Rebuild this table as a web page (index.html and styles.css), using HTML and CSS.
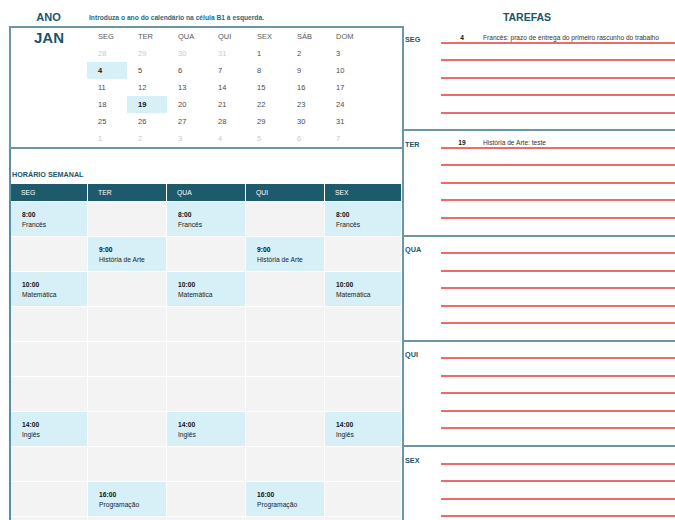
FILE: index.html
```html
<!DOCTYPE html>
<html lang="pt">
<head>
<meta charset="utf-8">
<title>Calendário escolar</title>
<link rel="stylesheet" href="styles.css">
</head>
<body>
<div class="page">
  <div class="top-left">
    <div class="ano">ANO</div>
    <div class="hint">Introduza o ano do calendário na célula B1 à esquerda.</div>
  </div>
  <div class="top-right"><h1 class="tasks-title">TAREFAS</h1></div>

  <div class="left">
    <section class="calendar">
      <div class="month">JAN</div>
      <div class="cal-grid">
        <div class="cal-head">SEG</div><div class="cal-head">TER</div><div class="cal-head">QUA</div><div class="cal-head">QUI</div><div class="cal-head">SEX</div><div class="cal-head">SÁB</div><div class="cal-head">DOM</div>
        <div class="d muted">28</div><div class="d muted">29</div><div class="d muted">30</div><div class="d muted">31</div><div class="d">1</div><div class="d">2</div><div class="d">3</div>
        <div class="d mark">4</div><div class="d">5</div><div class="d">6</div><div class="d">7</div><div class="d">8</div><div class="d">9</div><div class="d">10</div>
        <div class="d">11</div><div class="d">12</div><div class="d">13</div><div class="d">14</div><div class="d">15</div><div class="d">16</div><div class="d">17</div>
        <div class="d">18</div><div class="d mark">19</div><div class="d">20</div><div class="d">21</div><div class="d">22</div><div class="d">23</div><div class="d">24</div>
        <div class="d">25</div><div class="d">26</div><div class="d">27</div><div class="d">28</div><div class="d">29</div><div class="d">30</div><div class="d">31</div>
        <div class="d muted">1</div><div class="d muted">2</div><div class="d muted">3</div><div class="d muted">4</div><div class="d muted">5</div><div class="d muted">6</div><div class="d muted">7</div>
      </div>
    </section>

    <section class="schedule">
      <h2 class="sched-title">HORÁRIO SEMANAL</h2>
      <div class="sched-grid">
        <div class="sh">SEG</div><div class="sh">TER</div><div class="sh">QUA</div><div class="sh">QUI</div><div class="sh">SEX</div>

        <div class="c on"><b>8:00</b><span>Francês</span></div><div class="c"></div><div class="c on"><b>8:00</b><span>Francês</span></div><div class="c"></div><div class="c on"><b>8:00</b><span>Francês</span></div>

        <div class="c"></div><div class="c on"><b>9:00</b><span>História de Arte</span></div><div class="c"></div><div class="c on"><b>9:00</b><span>História de Arte</span></div><div class="c"></div>

        <div class="c on"><b>10:00</b><span>Matemática</span></div><div class="c"></div><div class="c on"><b>10:00</b><span>Matemática</span></div><div class="c"></div><div class="c on"><b>10:00</b><span>Matemática</span></div>

        <div class="c"></div><div class="c"></div><div class="c"></div><div class="c"></div><div class="c"></div>
        <div class="c"></div><div class="c"></div><div class="c"></div><div class="c"></div><div class="c"></div>
        <div class="c"></div><div class="c"></div><div class="c"></div><div class="c"></div><div class="c"></div>

        <div class="c on"><b>14:00</b><span>Inglês</span></div><div class="c"></div><div class="c on"><b>14:00</b><span>Inglês</span></div><div class="c"></div><div class="c on"><b>14:00</b><span>Inglês</span></div>

        <div class="c"></div><div class="c"></div><div class="c"></div><div class="c"></div><div class="c"></div>

        <div class="c"></div><div class="c on"><b>16:00</b><span>Programação</span></div><div class="c"></div><div class="c on"><b>16:00</b><span>Programação</span></div><div class="c"></div>

        <div class="c"></div><div class="c"></div><div class="c"></div><div class="c"></div><div class="c"></div>
      </div>
    </section>
  </div>

  <div class="tasks">
    <section class="day">
      <div class="day-label">SEG</div>
      <div class="lines">
        <div class="line"><span class="tdate">4</span><span class="ttext">Francês: prazo de entrega do primeiro rascunho do trabalho</span></div>
        <div class="line"></div><div class="line"></div><div class="line"></div><div class="line"></div>
      </div>
    </section>
    <section class="day">
      <div class="day-label">TER</div>
      <div class="lines">
        <div class="line"><span class="tdate">19</span><span class="ttext">História de Arte: teste</span></div>
        <div class="line"></div><div class="line"></div><div class="line"></div><div class="line"></div>
      </div>
    </section>
    <section class="day">
      <div class="day-label">QUA</div>
      <div class="lines">
        <div class="line"></div><div class="line"></div><div class="line"></div><div class="line"></div><div class="line"></div>
      </div>
    </section>
    <section class="day">
      <div class="day-label">QUI</div>
      <div class="lines">
        <div class="line"></div><div class="line"></div><div class="line"></div><div class="line"></div><div class="line"></div>
      </div>
    </section>
    <section class="day">
      <div class="day-label">SEX</div>
      <div class="lines">
        <div class="line"></div><div class="line"></div><div class="line"></div><div class="line"></div><div class="line"></div>
      </div>
    </section>
  </div>
</div>
</body>
</html>
```

FILE: styles.css
```css
* { box-sizing: border-box; }

html, body {
  margin: 0;
  padding: 0;
  background: #ffffff;
}

body {
  width: 675px;
  height: 520px;
  overflow: hidden;
  font-family: "Liberation Sans", Arial, sans-serif;
  color: #333333;
}

.page {
  display: grid;
  grid-template-columns: 402px 273px;
  grid-template-rows: 26px 494px;
  height: 520px;
  overflow: hidden;
}

/* ---------- top headers ---------- */
.top-left {
  display: flex;
  align-items: flex-end;
  padding-left: 10px;
  padding-bottom: 3px;
}

.ano {
  width: 77px;
  text-align: center;
  font-size: 11px;
  line-height: 11px;
  font-weight: bold;
  color: #1b546a;
}

.hint {
  padding-left: 2px;
  padding-bottom: 1px;
  font-size: 6.7px;
  line-height: 8px;
  font-weight: bold;
  color: #2a6a80;
}

.top-right {
  display: flex;
  align-items: flex-end;
  padding-bottom: 3px;
}

.tasks-title {
  margin: 0;
  width: 250px;
  text-align: center;
  font-size: 10.5px;
  line-height: 11px;
  font-weight: bold;
  color: #1b546a;
}

/* ---------- left column ---------- */
.left {
  padding-left: 9px;
  display: flex;
  flex-direction: column;
  overflow: hidden;
}

.calendar {
  display: flex;
  flex: none;
  height: 123px;
  border-top: 2px solid #6a96a5;
  border-bottom: 2px solid #6a96a5;
  border-left: 2px solid #6a96a5;
}

.month {
  width: 76px;
  padding-top: 1px;
  text-align: center;
  font-size: 15px;
  line-height: 17px;
  font-weight: bold;
  color: #1b546a;
}

.cal-grid {
  display: grid;
  grid-template-columns: 40px 40px 40px 39px 40px 39px 40px;
  grid-template-rows: repeat(7, 17px);
}

.cal-head,
.d {
  display: flex;
  align-items: center;
  padding-left: 11px;
  font-size: 7.5px;
  color: #4a4a4a;
}

.cal-head {
  color: #5a5a5a;
}

.d.muted {
  color: #c9c9c9;
}

.d.mark {
  background: #d7eff6;
  font-weight: bold;
  color: #111111;
}

.schedule {
  flex: 1;
  border-left: 2px solid #5a8eaa;
}

.sched-title {
  margin: 0;
  height: 35px;
  display: flex;
  align-items: flex-end;
  padding-left: 1px;
  padding-bottom: 5px;
  font-size: 7.2px;
  line-height: 9px;
  font-weight: bold;
  color: #1b546a;
}

.sched-grid {
  display: grid;
  width: 390px;
  grid-template-columns: 76px 78px 78px 78px 76px;
  grid-template-rows: 17px;
  grid-auto-rows: 34px;
  gap: 1px;
  background: #ffffff;
}

.sh {
  background: #1d5a6b;
  color: #ffffff;
  font-size: 6.8px;
  display: flex;
  align-items: center;
  padding-left: 10px;
}

.c {
  background: #f3f3f3;
  padding: 8px 0 0 11px;
  font-size: 6.7px;
  line-height: 9.5px;
  color: #222222;
}

.c.on {
  background: #d7eff6;
}

.c b,
.c span {
  display: block;
}

.c b {
  color: #111111;
}

/* ---------- tasks ---------- */
.tasks {
  border-left: 2px solid #6a96a5;
  overflow: hidden;
}

.day {
  height: 105.3px;
  display: grid;
  grid-template-columns: 37px 1fr;
  border-bottom: 2px solid #6a96a5;
}

.day-label {
  height: 17.5px;
  display: flex;
  align-items: flex-end;
  padding-left: 1px;
  padding-bottom: 0;
  font-size: 7.3px;
  line-height: 9px;
  font-weight: bold;
  color: #1b546a;
}

.line {
  height: 17.5px;
  display: flex;
  align-items: flex-end;
  padding-bottom: 0;
  border-bottom: 2px solid #ec6a6a;
  font-size: 6.6px;
  line-height: 8px;
  color: #333333;
}

.tdate {
  width: 42px;
  text-align: center;
  font-weight: bold;
  color: #111111;
}

.ttext {
  white-space: nowrap;
}
```
